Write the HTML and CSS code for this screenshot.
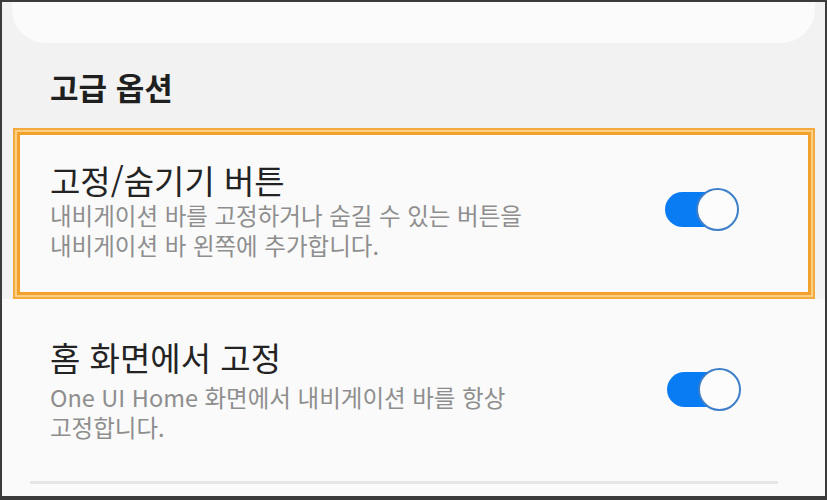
FILE: index.html
```html
<!DOCTYPE html>
<html lang="ko">
<head>
<meta charset="utf-8">
<title>고급 옵션</title>
<link rel="stylesheet" href="styles.css">
</head>
<body>
<div class="frame">
  <div class="topcard"></div>
  <h2 class="header">고급 옵션</h2>
  <div class="row highlight">
    <div class="text">
      <div class="title">고정/숨기기 버튼</div>
      <div class="desc">내비게이션 바를 고정하거나 숨길 수 있는 버튼을<br>내비게이션 바 왼쪽에 추가합니다.</div>
    </div>
    <div class="toggle"><span class="knob"></span></div>
  </div>
  <div class="lower">
    <div class="row plain">
      <div class="text">
        <div class="title">홈 화면에서 고정</div>
        <div class="desc desc-gap">One UI Home 화면에서 내비게이션 바를 항상<br>고정합니다.</div>
      </div>
      <div class="toggle"><span class="knob"></span></div>
    </div>
    <div class="divider"></div>
  </div>
</div>
</body>
</html>
```

FILE: styles.css
```css
html, body {
  margin: 0;
  padding: 0;
  background: #3b3b3b;
}
.frame {
  width: 827px;
  height: 500px;
  box-sizing: border-box;
  border: 2px solid #3b3b3b;
  border-bottom-width: 4px;
  background: #f2f2f2;
  overflow: hidden;
  display: flex;
  flex-direction: column;
  font-family: "Noto Sans CJK KR", "Noto Sans", sans-serif;
}
.topcard {
  flex: none;
  height: 41px;
  margin: 0 10px;
  background: #fbfbfb;
  border-radius: 0 0 34px 34px;
}
.header {
  margin: 24px 0 0 0;
  padding-left: 48px;
  font-size: 31px;
  line-height: 40px;
  font-weight: 700;
  color: #1f1f1f;
}
.row {
  display: flex;
  align-items: center;
  justify-content: space-between;
}
.highlight {
  flex: none;
  margin: 21px 10px 0 11px;
  height: 171px;
  box-sizing: border-box;
  border: 2px solid #f4a93c;
  box-shadow: inset 0 0 0 2px #fbcf86, inset 0 0 0 5px #f2a12a;
  background: #fafafa;
  padding: 0 74px 8px 35px;
}
.lower {
  flex: 1;
  background: #fafafa;
  display: flex;
  flex-direction: column;
}
.plain {
  padding: 30px 84px 0 48px;
  height: 150px;
  box-sizing: border-box;
}
.title {
  font-size: 33px;
  line-height: 40px;
  color: #232323;
}
.desc {
  font-size: 23.5px;
  line-height: 30px;
  color: #8e8e8e;
}
.desc-gap {
  margin-top: 5px;
}
.toggle {
  position: relative;
  width: 74px;
  height: 43px;
  flex: none;
}
.toggle::before {
  content: "";
  position: absolute;
  left: 0;
  top: 4px;
  width: 58px;
  height: 35px;
  border-radius: 18px;
  background: #0a7cf3;
}
.knob {
  position: absolute;
  right: 0;
  top: 0;
  width: 43px;
  height: 43px;
  box-sizing: border-box;
  border-radius: 50%;
  background: #fcfcfc;
  border: 2px solid #3d7fc9;
}
.divider {
  margin: 32px 47px 0 28px;
  height: 3px;
  background: #e6e6e6;
}
```
